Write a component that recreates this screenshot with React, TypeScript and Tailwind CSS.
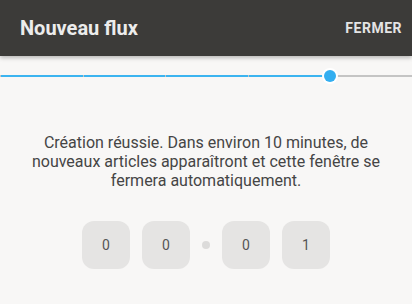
export default function App() {
  const ticks = [0, 1, 2, 3, 4]
  const digits = ['0', '0', '0', '1']

  return (
    <div className="h-[304px] w-[412px] overflow-hidden bg-[#f8f7f6] font-['Roboto',sans-serif]">
      <header className="relative z-10 flex h-[56px] items-center justify-between bg-[#3c3b39] pl-5 pr-[10px] shadow-[0_2px_4px_rgba(0,0,0,0.25)]">
        <h1 className="text-[20px] font-bold text-[#ececec]">Nouveau flux</h1>
        <button type="button" className="text-[14px] font-bold tracking-[0.5px] text-[#e4e4e4]">
          FERMER
        </button>
      </header>

      <div className="relative mt-[19px] h-[2px] w-full bg-[#c4c4c4]">
        <div className="absolute left-0 top-0 h-[2px] w-[330px] bg-[#3cb4f0]" />
        {ticks.map(i => (
          <div
            key={i}
            className="absolute top-0 h-[2px] w-px bg-[#c4c4c4]"
            style={{ left: `${i * 82.5}px` }}
          />
        ))}
        <div className="absolute left-[322px] top-[-7px] h-[16px] w-[16px] rounded-full bg-white p-[2px]">
          <div className="h-full w-full rounded-full bg-[#33aef0]" />
        </div>
      </div>

      <p className="mx-auto mt-[56px] w-[360px] text-center text-[16px] leading-[19px] text-[#454545]">
        Création réussie. Dans environ 10 minutes, de nouveaux articles apparaîtront et cette fenêtre se fermera automatiquement.
      </p>

      <div className="mt-[31px] flex items-center justify-center">
        <div className="flex gap-3">
          {digits.slice(0, 2).map((d, i) => (
            <div key={i} className="flex h-[48px] w-[48px] items-center justify-center rounded-[12px] bg-[#e5e4e3] text-[14px] text-[#555]">
              {d}
            </div>
          ))}
        </div>
        <div className="mx-[12px] h-[8px] w-[8px] rounded-full bg-[#dcdbda]" />
        <div className="flex gap-3">
          {digits.slice(2).map((d, i) => (
            <div key={i} className="flex h-[48px] w-[48px] items-center justify-center rounded-[12px] bg-[#e5e4e3] text-[14px] text-[#555]">
              {d}
            </div>
          ))}
        </div>
      </div>
    </div>
  )
}
